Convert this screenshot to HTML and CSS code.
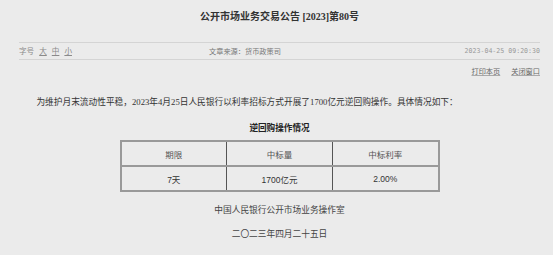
FILE: index.html
```html
<!DOCTYPE html>
<html lang="zh-CN">
<head>
    <meta charset="UTF-8">
    <title>公开市场业务交易公告 [2023]第80号</title>
    <link rel="stylesheet" href="styles.css">
</head>
<body>

<div class="page">
    <h1 class="title">公开市场业务交易公告 [2023]第80号</h1>

    <div class="meta">
        <div class="font-size">字号<a href="#">大</a><a href="#">中</a><a href="#">小</a></div>
        <div class="source">文章来源：货币政策司</div>
        <div class="date">2023-04-25 09:20:30</div>
    </div>

    <div class="tools">
        <a href="#">打印本页</a>
        <a href="#">关闭窗口</a>
    </div>

    <p class="intro">为维护月末流动性平稳，2023年4月25日人民银行以利率招标方式开展了1700亿元逆回购操作。具体情况如下：</p>

    <p class="caption">逆回购操作情况</p>

    <table class="ops">
        <tr>
            <th>期限</th>
            <th>中标量</th>
            <th>中标利率</th>
        </tr>
        <tr>
            <td>7天</td>
            <td>1700亿元</td>
            <td>2.00%</td>
        </tr>
    </table>

    <p class="sign">中国人民银行公开市场业务操作室</p>
    <p class="sign date-line">二〇二三年四月二十五日</p>
</div>

</body>
</html>
```

FILE: styles.css
```css
body {
    margin: 0;
    padding: 0;
    background-color: #ebebeb;
    font-family: "Noto Sans CJK SC", sans-serif;
    color: #333;
}
a {
    color: inherit;
    text-decoration: none;
}
.page {
    width: 521px;
    margin-left: 19px;
}
.title {
    margin: 0;
    padding-top: 7px;
    margin-bottom: 15px;
    height: 20px;
    line-height: 20px;
    text-align: center;
    font-family: "Liberation Serif", "Noto Sans CJK SC", serif;
    font-size: 10px;
    font-weight: bold;
    color: #333;
}
.meta {
    display: flex;
    height: 16px;
    line-height: 16px;
    border-top: 1px solid #d4d4d4;
    border-bottom: 1px solid #d4d4d4;
    font-size: 7.6px;
    color: #8a8a8a;
}
.meta .font-size {
    width: 190px;
}
.meta .font-size a {
    margin-left: 5px;
    text-decoration: underline;
}
.meta .source {
    flex: 1;
    color: #777;
    font-size: 7.2px;
}
.meta .date {
    font-family: "DejaVu Sans Mono", monospace;
    font-size: 6.6px;
    color: #999;
}
.tools {
    display: flex;
    justify-content: flex-end;
    gap: 11px;
    margin-top: 3px;
    height: 16px;
    line-height: 16px;
    font-size: 7.2px;
    color: #666;
}
.tools a {
    text-decoration: underline;
    text-decoration-color: #aaa;
}
.intro {
    margin: 15px 0 0;
    line-height: 16px;
    text-indent: 2em;
    font-family: "Liberation Serif", "Noto Sans CJK SC", serif;
    font-size: 8.7px;
    color: #333;
    white-space: nowrap;
}
.caption {
    margin: 9px 0 0;
    line-height: 16px;
    text-align: center;
    font-size: 8.6px;
    font-weight: bold;
    color: #222;
}
.ops {
    margin: 5px auto 0;
    width: 320px;
    border-collapse: collapse;
    border: 2px solid #999;
    font-family: "Liberation Sans", "Noto Sans CJK SC", sans-serif;
    font-size: 8.5px;
    color: #444;
}
.ops th, .ops td {
    width: 33.3%;
    height: 23px;
    padding: 0;
    text-align: center;
    font-weight: normal;
    border-left: 1px solid #555;
    border-right: 1px solid #555;
}
.ops th {
    color: #555;
    border-bottom: 2px solid #999;
}
.ops td {
    color: #333;
}
.sign {
    margin: 10px 0 0;
    line-height: 16px;
    text-align: center;
    font-size: 8.7px;
    color: #444;
}
.sign.date-line {
    margin-top: 8px;
}
```
